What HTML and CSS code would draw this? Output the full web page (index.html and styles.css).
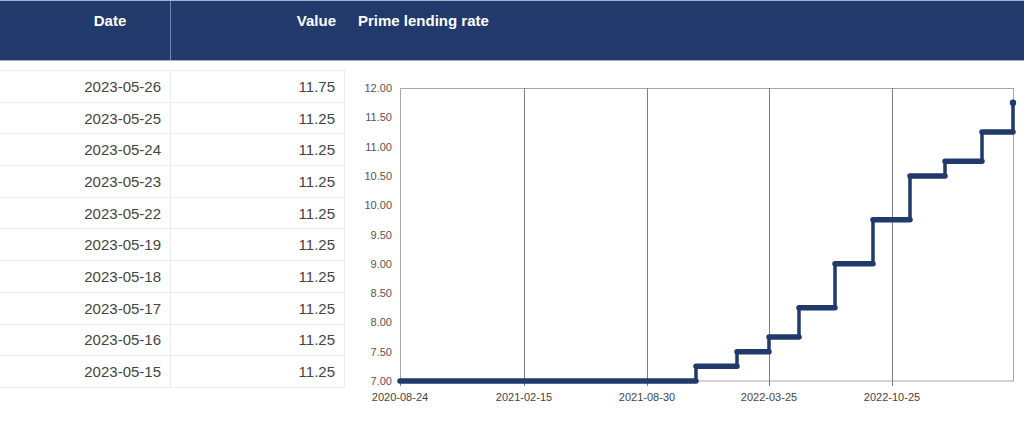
FILE: index.html
```html
<!DOCTYPE html>
<html lang="en">
<head>
<meta charset="utf-8">
<title>Prime lending rate</title>
<link rel="stylesheet" href="styles.css">
</head>
<body>
<div class="page">
  <section class="table-panel">
    <div class="thead">
      <div class="th th-date">Date</div>
      <div class="th th-value">Value</div>
    </div>
    <div class="tbody">
      <div class="tr"><div class="td td-date">2023-05-26</div><div class="td td-value">11.75</div></div>
      <div class="tr"><div class="td td-date">2023-05-25</div><div class="td td-value">11.25</div></div>
      <div class="tr"><div class="td td-date">2023-05-24</div><div class="td td-value">11.25</div></div>
      <div class="tr"><div class="td td-date">2023-05-23</div><div class="td td-value">11.25</div></div>
      <div class="tr"><div class="td td-date">2023-05-22</div><div class="td td-value">11.25</div></div>
      <div class="tr"><div class="td td-date">2023-05-19</div><div class="td td-value">11.25</div></div>
      <div class="tr"><div class="td td-date">2023-05-18</div><div class="td td-value">11.25</div></div>
      <div class="tr"><div class="td td-date">2023-05-17</div><div class="td td-value">11.25</div></div>
      <div class="tr"><div class="td td-date">2023-05-16</div><div class="td td-value">11.25</div></div>
      <div class="tr"><div class="td td-date">2023-05-15</div><div class="td td-value">11.25</div></div>
    </div>
  </section>
  <section class="chart-panel">
    <div class="chart-head">Prime lending rate</div>
    <svg class="chart" viewBox="345 61 679 362" width="679" height="362" xmlns="http://www.w3.org/2000/svg">
      <g class="ylabels">
        <text x="392" y="92">12.00</text>
        <text x="392" y="121.3">11.50</text>
        <text x="392" y="150.6">11.00</text>
        <text x="392" y="179.9">10.50</text>
        <text x="392" y="209.2">10.00</text>
        <text x="392" y="238.5">9.50</text>
        <text x="392" y="267.8">9.00</text>
        <text x="392" y="297.1">8.50</text>
        <text x="392" y="326.4">8.00</text>
        <text x="392" y="355.7">7.50</text>
        <text x="392" y="385">7.00</text>
      </g>
      <rect class="frame" x="400.5" y="88.5" width="613" height="292.5"/>
      <g class="vgrid">
        <line x1="524.5" y1="88" x2="524.5" y2="386"/>
        <line x1="647.5" y1="88" x2="647.5" y2="386"/>
        <line x1="769.5" y1="88" x2="769.5" y2="386"/>
        <line x1="892.5" y1="88" x2="892.5" y2="386"/>
        <line x1="400.5" y1="381" x2="400.5" y2="386"/>
      </g>
      <g class="xlabels">
        <text x="400" y="401">2020-08-24</text>
        <text x="524" y="401">2021-02-15</text>
        <text x="647" y="401">2021-08-30</text>
        <text x="769" y="401">2022-03-25</text>
        <text x="892" y="401">2022-10-25</text>
      </g>
      <g class="series">
        <path class="risers" d="M696 381 V366.35 M737 366.35 V351.7 M769 351.7 V337.05 M799 337.05 V307.75 M835 307.75 V263.8 M873 263.8 V219.85 M910 219.85 V175.9 M945 175.9 V161.25 M982 161.25 V131.95 M1013 131.95 V102.65"/>
        <path class="treads" d="M400 381 H696 M696 366.35 H737 M737 351.7 H769 M769 337.05 H799 M799 307.75 H835 M835 263.8 H873 M873 219.85 H910 M910 175.9 H945 M945 161.25 H982 M982 131.95 H1013"/>
        <circle class="dot" cx="1013" cy="102.65" r="3.2"/>
      </g>
    </svg>
  </section>
</div>
</body>
</html>
```

FILE: styles.css
```css
* { box-sizing: border-box; }

html, body {
  margin: 0;
  padding: 0;
  background: #ffffff;
  font-family: "Liberation Sans", Arial, sans-serif;
}

.page {
  display: flex;
  width: 1024px;
  height: 423px;
  overflow: hidden;
}

.table-panel {
  width: 345px;
  flex: none;
}

.thead {
  display: flex;
  height: 61px;
  background: #213a6b;
  border-top: 1px solid #9fb0d2;
  border-bottom: 1px solid #9fb0d2;
}

.th {
  color: #ffffff;
  font-weight: bold;
  font-size: 15px;
  padding-top: 11px;
}

.th-date {
  width: 171px;
  text-align: center;
  padding-left: 50px;
  border-right: 1px solid #6f86b4;
}

.th-value {
  flex: 1;
  text-align: right;
  padding-right: 9px;
}

.tbody {
  margin-top: 9px;
  border-top: 1px solid #ededed;
}

.tr {
  display: flex;
  height: 31.7px;
  border-bottom: 1px solid #ededed;
}

.td {
  font-size: 15px;
  color: #444444;
  padding-right: 9px;
  display: flex;
  align-items: center;
  justify-content: flex-end;
}

.td-date {
  width: 171px;
  border-right: 1px solid #ededed;
}

.td-value {
  flex: 1;
  border-right: 1px solid #ededed;
}

.chart-panel {
  flex: 1;
  display: flex;
  flex-direction: column;
}

.chart-head {
  height: 61px;
  flex: none;
  background: #213a6b;
  border-top: 1px solid #9fb0d2;
  border-bottom: 1px solid #9fb0d2;
  color: #ffffff;
  font-weight: bold;
  font-size: 15px;
  padding: 11px 0 0 13px;
}

.chart {
  display: block;
}

.ylabels text {
  font-family: "Liberation Sans", Arial, sans-serif;
  font-size: 11px;
  fill: #555555;
  text-anchor: end;
}

.xlabels text {
  font-family: "Liberation Sans", Arial, sans-serif;
  font-size: 11px;
  fill: #444444;
  text-anchor: middle;
}

.frame {
  fill: none;
  stroke: #a6a6a6;
  stroke-width: 1;
}

.vgrid line {
  stroke: #7d7d7d;
  stroke-width: 1;
}

.risers {
  fill: none;
  stroke: #21396b;
  stroke-width: 3.5;
}

.treads {
  fill: none;
  stroke: #21396b;
  stroke-width: 5.5;
  stroke-linecap: round;
}

.dot {
  fill: #21396b;
}
```
